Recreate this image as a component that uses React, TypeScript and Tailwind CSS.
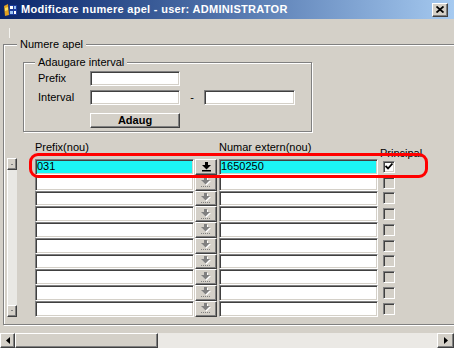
const rows = Array.from({ length: 10 }, (_, i) => i)

const sunken =
  'border border-t-[#808080] border-l-[#808080] border-b-white border-r-white shadow-[inset_1px_1px_0_#404040,inset_-1px_-1px_0_#d4d0c8]'
const raised =
  'bg-[#d4d0c8] border border-t-white border-l-white border-b-[#404040] border-r-[#404040] shadow-[inset_-1px_-1px_0_#808080,inset_1px_1px_0_#d4d0c8]'
const etched = 'border border-[#808080] shadow-[inset_1px_1px_0_#fff,1px_1px_0_#fff]'

function AppIcon() {
  return (
    <svg width="15" height="14" viewBox="0 0 15 14">
      <path d="M1 3 L5 1 L6 12 L2 13 Z" fill="#e0a020" />
      <path d="M2 5 L5 4 L5 7 L2 8 Z" fill="#f8e060" />
      <rect x="6" y="2" width="8" height="10" fill="#1c3c9c" />
      <rect x="7" y="3" width="3" height="3" fill="#fff" />
      <rect x="11" y="3" width="2" height="3" fill="#9cc4f4" />
      <rect x="7" y="8" width="3" height="3" fill="#9cc4f4" />
      <rect x="11" y="8" width="2" height="3" fill="#fff" />
    </svg>
  )
}

function PutIcon({ active }: { active: boolean }) {
  if (active) {
    return (
      <svg width="9" height="10" viewBox="0 0 9 10">
        <rect x="3" y="0" width="3" height="3" fill="#000" />
        <path d="M0 3 H9 L4.5 7.5 Z" fill="#000" />
        <rect x="0" y="8" width="9" height="1.5" fill="#000" />
      </svg>
    )
  }
  return (
    <svg width="10" height="11" viewBox="0 0 10 11">
      <g fill="#fff" transform="translate(1 1)">
        <rect x="3" y="0" width="3" height="3" />
        <path d="M0 3 H9 L4.5 7.5 Z" />
      </g>
      <g fill="#808080">
        <rect x="3" y="0" width="3" height="3" />
        <path d="M0 3 H9 L4.5 7.5 Z" />
      </g>
      <g fill="#808080">
        <rect x="0" y="9" width="1" height="1" />
        <rect x="2" y="9" width="1" height="1" />
        <rect x="4" y="9" width="1" height="1" />
        <rect x="6" y="9" width="1" height="1" />
        <rect x="8" y="9" width="1" height="1" />
      </g>
    </svg>
  )
}

function Check({ checked }: { checked: boolean }) {
  return (
    <div
      className={`w-[12px] h-[12px] flex items-center justify-center ${sunken} ${
        checked ? 'bg-white' : 'bg-[#d4d0c8]'
      }`}
    >
      {checked && (
        <svg width="8" height="7" viewBox="0 0 8 7">
          <path d="M0.5 3 L3 5.5 L7.5 0.5" stroke="#000" strokeWidth="1.8" fill="none" />
        </svg>
      )}
    </div>
  )
}

function TitleBar() {
  return (
    <div className="h-[19px] shrink-0 flex items-center pl-[3px] bg-gradient-to-r from-[#0a246a] to-[#a6caf0]">
      <AppIcon />
      <span className="ml-[3px] text-white font-bold text-[11px] tracking-[0.3px] leading-none whitespace-nowrap">
        Modificare numere apel - user: ADMINISTRATOR
      </span>
      <div className={`ml-auto mr-[6px] w-[16px] h-[14px] flex items-center justify-center ${raised}`}>
        <svg width="8" height="7" viewBox="0 0 8 7">
          <path d="M0.5 0.5 L7.5 6.5 M7.5 0.5 L0.5 6.5" stroke="#000" strokeWidth="1.8" />
        </svg>
      </div>
    </div>
  )
}

function HScroll() {
  return (
    <div className="mt-auto h-[15px] flex shrink-0">
      <div className={`w-[15px] h-full flex items-center justify-center ${raised}`}>
        <svg width="4" height="7" viewBox="0 0 4 7">
          <path d="M4 0 V7 L0 3.5 Z" fill="#000" />
        </svg>
      </div>
      <div className={`w-[143px] h-full ${raised}`} />
      <div className="flex-1 h-full bg-[#ebe9e5]" />
      <div className={`w-[17px] h-full flex items-center justify-center ${raised}`}>
        <svg width="4" height="7" viewBox="0 0 4 7">
          <path d="M0 0 V7 L4 3.5 Z" fill="#000" />
        </svg>
      </div>
    </div>
  )
}

export default function App() {
  return (
    <div className="relative w-[454px] h-[348px] overflow-hidden bg-[#d4d0c8] flex flex-col font-['Liberation_Sans',Arial,sans-serif] text-[11px] text-black">
      <TitleBar />
      <div className="ml-[9px] mt-[9px] h-[10px] w-px bg-[#f4f3ef] shrink-0" />

      <fieldset className={`ml-[3px] w-[470px] h-[287px] shrink-0 ${etched}`}>
        <legend className="ml-[13px] px-[3px] leading-[13px] bg-[#d4d0c8]">Numere apel</legend>

        <fieldset className={`ml-[19px] mt-[5px] w-[289px] h-[76px] ${etched}`}>
          <legend className="ml-[11px] px-[3px] leading-[13px] bg-[#d4d0c8]">Adaugare interval</legend>
          <div className="pl-[14px] flex flex-col">
            <div className="mt-[2px] flex items-center h-[15px]">
              <span className="w-[52px]">Prefix</span>
              <div className={`w-[90px] h-[15px] bg-white ${sunken}`} />
            </div>
            <div className="mt-[4px] flex items-center h-[15px]">
              <span className="w-[52px]">Interval</span>
              <div className={`w-[90px] h-[15px] bg-white ${sunken}`} />
              <span className="w-[24px] text-center">-</span>
              <div className={`w-[91px] h-[15px] bg-white ${sunken}`} />
            </div>
            <div className="mt-[8px] ml-[52px] flex">
              <button className={`w-[90px] h-[15px] flex items-center justify-center font-bold text-[11px] leading-none ${raised}`}>
                Adaug
              </button>
            </div>
          </div>
        </fieldset>

        <div className="mt-[9px] ml-[31px] h-[18px] flex">
          <span className="w-[184px] leading-[13px]">Prefix(nou)</span>
          <span className="w-[161px] leading-[13px]">Numar extern(nou)</span>
          <span className="self-end leading-[13px] -mb-[1px]">Principal</span>
        </div>

        <div className="flex">
          <div className="ml-[3px] w-[10px] flex flex-col -mt-[1px]">
            <div className={`h-[12px] flex items-center justify-center ${raised}`}>
              <div className="w-[2px] h-px bg-[#808080]" />
            </div>
            <div className="flex-1 bg-[#e9e8e4] border-l border-white" />
            <div className={`h-[12px] flex items-center justify-center ${raised}`}>
              <div className="w-[2px] h-px bg-[#808080]" />
            </div>
          </div>

          <div className="ml-[18px] flex flex-col">
            {rows.map((i) => {
              const sel = i === 0
              return (
                <div key={i} className="flex items-stretch h-[15.75px]">
                  <div className={`w-[159px] pl-[1px] leading-[13px] ${sunken} ${sel ? 'bg-[#1cf5f5]' : 'bg-white'}`}>
                    {sel ? '031' : ''}
                  </div>
                  <div className={`ml-[1px] w-[22px] flex items-center justify-center ${raised}`}>
                    <PutIcon active={sel} />
                  </div>
                  <div className={`ml-[2px] w-[159px] pl-[1px] leading-[13px] ${sunken} ${sel ? 'bg-[#1cf5f5]' : 'bg-white'}`}>
                    {sel ? '1650250' : ''}
                  </div>
                  <div className="ml-[5px] flex items-center">
                    <Check checked={sel} />
                  </div>
                </div>
              )
            })}
          </div>
        </div>
      </fieldset>

      <HScroll />

      <div className="absolute left-[29px] top-[153px] w-[399px] h-[25px] border-[3px] border-[#f00] rounded-[9px] pointer-events-none" />
    </div>
  )
}
